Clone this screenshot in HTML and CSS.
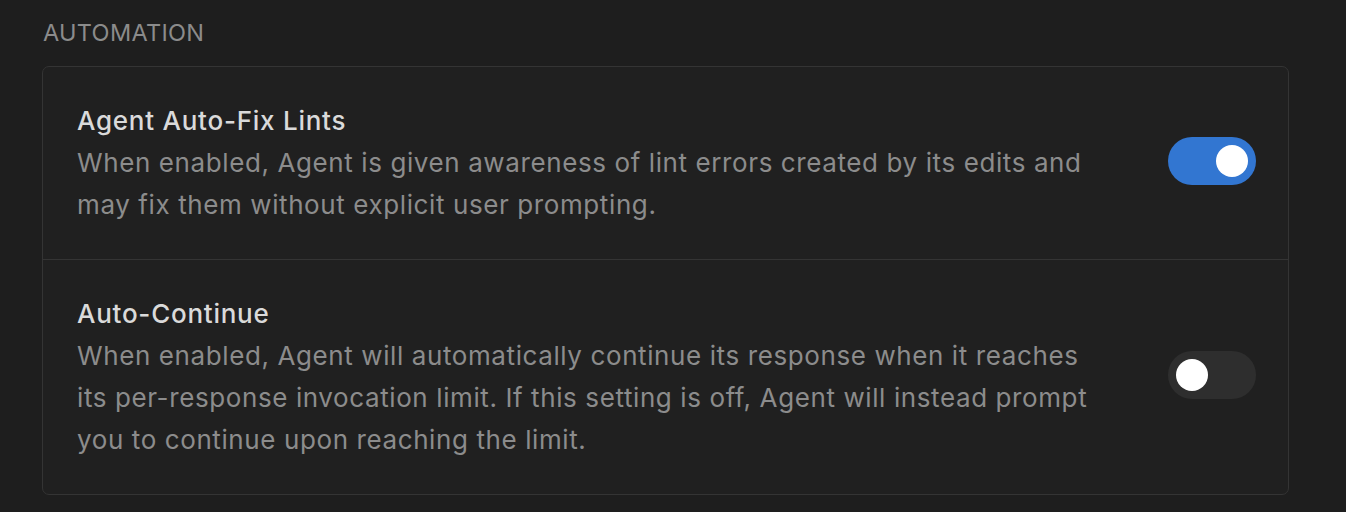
FILE: index.html
```html
<!DOCTYPE html>
<html>
<head>
<meta charset="utf-8">
<link rel="stylesheet" href="styles.css">
</head>
<body>
<div class="page">
  <div class="section-title">AUTOMATION</div>
  <div class="card">
    <div class="row">
      <div class="text">
        <div class="title">Agent Auto-Fix Lints</div>
        <div class="desc">When enabled, Agent is given awareness of lint errors created by its edits and may fix them without explicit user prompting.</div>
      </div>
      <div class="toggle on"><span class="knob"></span></div>
    </div>
    <div class="row">
      <div class="text">
        <div class="title">Auto-Continue</div>
        <div class="desc">When enabled, Agent will automatically continue its response when it reaches its per-response invocation limit. If this setting is off, Agent will instead prompt you to continue upon reaching the limit.</div>
      </div>
      <div class="toggle off"><span class="knob"></span></div>
    </div>
  </div>
</div>
</body>
</html>
```
FILE: styles.css
```css
html, body {
  margin: 0;
  padding: 0;
  background: #1e1e1e;
  font-family: Inter, "Noto Sans", sans-serif;
}
.page {
  padding: 18px 57px 0 42px;
}
.section-title {
  font-size: 23.5px;
  line-height: 30px;
  letter-spacing: 0.3px;
  color: #8b8b8b;
  padding-left: 1px;
  margin-bottom: 18px;
}
.card {
  border: 1.5px solid #343434;
  border-radius: 7px;
  background: #202020;
}
.row {
  display: flex;
  align-items: center;
  justify-content: space-between;
  padding: 38px 32px 33px 34px;
}
.row + .row {
  border-top: 1.5px solid #343434;
}
.text {
  width: 1030px;
}
.title {
  font-size: 26px;
  line-height: 32px;
  font-weight: 500;
  letter-spacing: 0.75px;
  color: #dadada;
  margin-bottom: 5px;
}
.desc {
  font-size: 26px;
  line-height: 42px;
  letter-spacing: 0.6px;
  color: #8c8c8c;
}
.toggle {
  width: 88px;
  height: 48px;
  border-radius: 24px;
  display: flex;
  align-items: center;
  padding: 0 8px;
  box-sizing: border-box;
  flex-shrink: 0;
  margin-bottom: 10px;
}
.toggle.on {
  background: #3276d1;
  justify-content: flex-end;
}
.toggle.off {
  background: #2e2e2e;
  justify-content: flex-start;
}
.knob {
  width: 32px;
  height: 32px;
  border-radius: 50%;
  background: #ffffff;
}
```
